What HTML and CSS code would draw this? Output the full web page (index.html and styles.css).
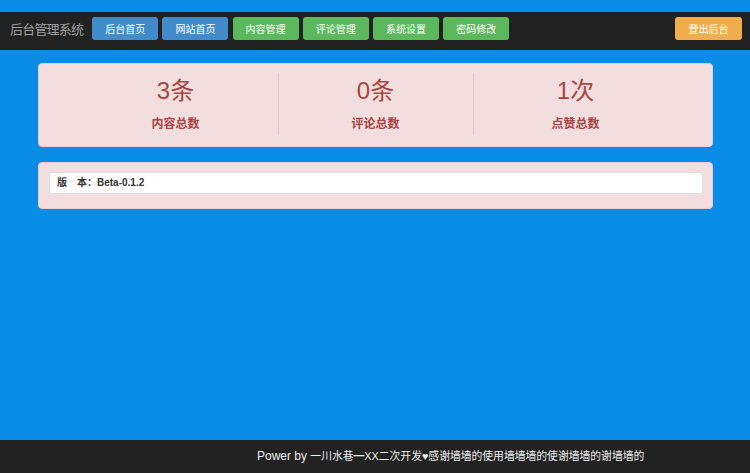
FILE: index.html
```html
<!DOCTYPE html>
<html lang="zh-CN">
<head>
<meta charset="utf-8">
<title>后台管理系统</title>
<link rel="stylesheet" href="styles.css">
</head>
<body>
<div class="page">
  <nav class="navbar">
    <span class="brand">后台管理系统</span>
    <div class="nav-btns">
      <a class="btn btn-blue" href="#">后台首页</a>
      <a class="btn btn-blue" href="#">网站首页</a>
      <a class="btn btn-green" href="#">内容管理</a>
      <a class="btn btn-green" href="#">评论管理</a>
      <a class="btn btn-green" href="#">系统设置</a>
      <a class="btn btn-green" href="#">密码修改</a>
    </div>
    <a class="btn btn-orange logout" href="#">登出后台</a>
  </nav>
  <main class="main">
    <section class="panel stats">
      <div class="stats-row">
        <div class="stat">
          <div class="num">3条</div>
          <div class="label">内容总数</div>
        </div>
        <div class="stat mid">
          <div class="num">0条</div>
          <div class="label">评论总数</div>
        </div>
        <div class="stat">
          <div class="num">1次</div>
          <div class="label">点赞总数</div>
        </div>
      </div>
    </section>
    <section class="panel info">
      <div class="info-box">版　本：Beta-0.1.2</div>
    </section>
  </main>
  <footer class="footer">
    <div class="marquee">Power by <span class="marquee-cn">一川水巷━XX二次开发♥感谢墙墙的使用墙墙墙的使谢墙墙的谢墙墙的</span></div>
  </footer>
</div>
</body>
</html>
```

FILE: styles.css
```css
html, body {
  margin: 0;
  padding: 0;
}

body {
  background: #098ce6;
  font-family: "Liberation Sans", "Noto Sans CJK SC", sans-serif;
}

.page {
  display: flex;
  flex-direction: column;
  min-height: 100vh;
  padding-top: 12px;
  box-sizing: border-box;
}

.navbar {
  height: 38px;
  background: #212121;
  display: flex;
  align-items: flex-start;
  padding: 5px 8px 0 10px;
  box-sizing: border-box;
}

.brand {
  font-family: "Noto Sans CJK SC", sans-serif;
  font-size: 13px;
  letter-spacing: -0.8px;
  line-height: 23px;
  color: #a0a0a0;
  margin-right: 9px;
}

.nav-btns {
  display: flex;
  gap: 4.2px;
}

.btn {
  display: block;
  width: 66px;
  height: 23px;
  line-height: 23px;
  font-family: "Noto Sans CJK SC", sans-serif;
  font-size: 10px;
  color: #fff;
  text-align: center;
  text-decoration: none;
  border-radius: 3px;
}

.btn-blue {
  background: #428bca;
}

.btn-green {
  background: #5cb85c;
}

.btn-orange {
  background: #f0ad4e;
}

.logout {
  margin-left: auto;
  width: 67px;
}

.main {
  flex: 1;
  padding: 13px 37px 0 38px;
}

.panel {
  background: #f2dede;
  border: 1px solid #ebccd1;
  border-radius: 4px;
}

.stats {
  padding: 9px 0 11px;
}

.stats-row {
  display: grid;
  grid-template-columns: repeat(3, 200px);
  justify-content: center;
}

.stat {
  height: 62px;
  padding-top: 5px;
  box-sizing: border-box;
  text-align: center;
  color: #a94442;
}

.stat.mid {
  border-left: 1px solid #e2c6c6;
  border-right: 1px solid #e2c6c6;
  margin: 0 2px;
}

.num {
  font-size: 24px;
  line-height: 26px;
}

.label {
  font-family: "Noto Sans CJK SC", sans-serif;
  font-size: 12px;
  font-weight: bold;
  line-height: 16px;
  margin-top: 11px;
}

.info {
  margin-top: 15px;
  padding: 9px 9px 14px 10px;
}

.info-box {
  height: 22px;
  box-sizing: border-box;
  background: #fff;
  border: 1px solid #ddd;
  border-radius: 3px;
  padding-left: 7px;
  font-size: 10px;
  font-weight: bold;
  line-height: 20px;
  color: #333;
}

.footer {
  height: 33px;
  background: #222;
}

.marquee {
  margin-left: 257px;
  width: 400px;
  overflow: hidden;
  white-space: nowrap;
  font-size: 12px;
  line-height: 33px;
  color: #eee;
}

.marquee-cn {
  font-size: 10.8px;
}
```
